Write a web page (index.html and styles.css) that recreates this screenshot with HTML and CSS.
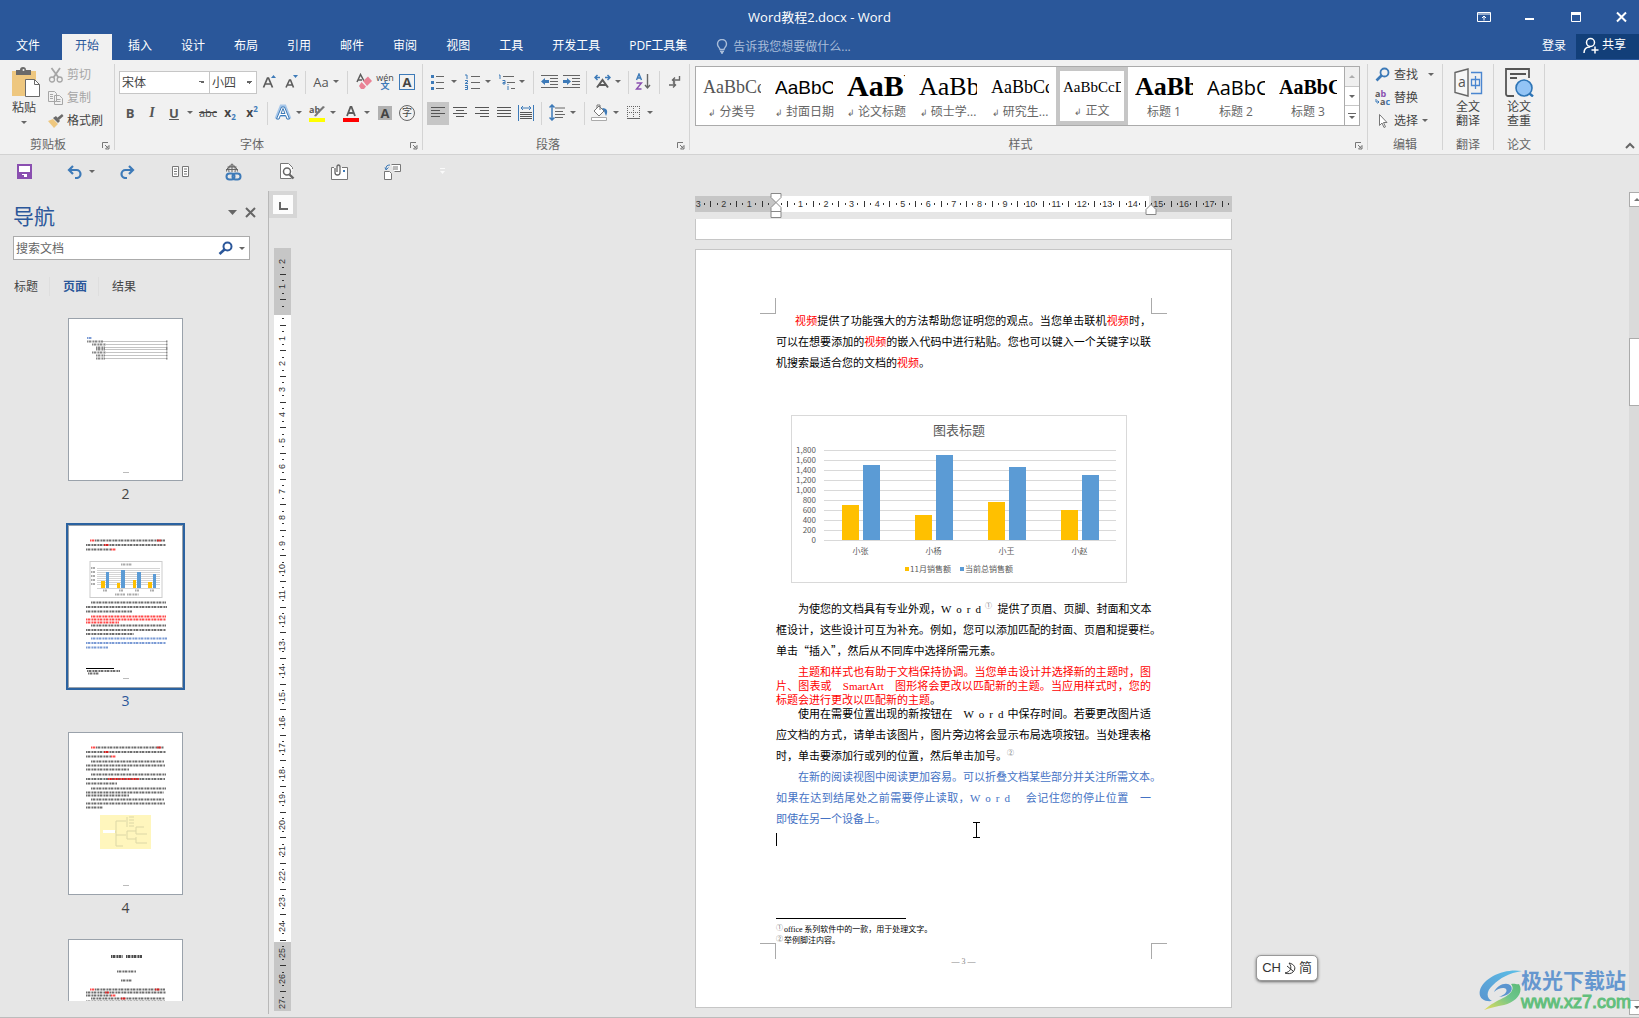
FILE: index.html
```html
<!DOCTYPE html>
<html lang="zh-CN">
<head>
<meta charset="utf-8">
<title>Word教程2.docx - Word</title>
<link rel="stylesheet" href="styles.css">
</head>
<body>
<div class="app">

<header class="top">
  <div class="titlebar">
    <h1 class="title">Word教程2.docx - Word</h1>
    <div class="win">
      <button aria-label="功能区显示选项"><svg width="14" height="12" viewBox="0 0 14 12"><path d="M.5 1.500h13v9H.5zM.5 3h13M7 9.500V5M5 7l2-2 2 2" fill="none" stroke="#fff"/></svg></button>
      <button aria-label="最小化"><svg width="10" height="12" viewBox="0 0 10 12"><path d="M0 8h9" stroke="#fff" stroke-width="2"/></svg></button>
      <button aria-label="最大化"><svg width="11" height="12" viewBox="0 0 11 12"><path d="M.5 1.500h9v9h-9z" fill="none" stroke="#fff"/><path d="M0 2.500h10" stroke="#fff" stroke-width="3"/></svg></button>
      <button aria-label="关闭"><svg width="11" height="12" viewBox="0 0 11 12"><path d="M1 1.500l9 9M10 1.500l-9 9" stroke="#fff" stroke-width="2"/></svg></button>
    </div>
  </div>
  <nav class="tabs">
    <button class="file">文件</button>
    <button class="on">开始</button>
    <button>插入</button>
    <button>设计</button>
    <button>布局</button>
    <button>引用</button>
    <button>邮件</button>
    <button>审阅</button>
    <button>视图</button>
    <button>工具</button>
    <button>开发工具</button>
    <button>PDF工具集</button>
    <button class="tell"><svg width="12" height="15" viewBox="0 0 12 15"><path d="M4 10.500C4 8.500 1.500 8 1.500 5a4.500 4.500 0 0 1 9 0c0 3-2.500 3.500-2.500 5.500zM4 12.500h4M5 14h2" fill="none" stroke="#a9bdd9" stroke-width="1.400"/></svg>告诉我您想要做什么...</button>
    <span class="grow"></span>
    <button class="login">登录</button>
    <button class="share"><svg width="16" height="17" viewBox="0 0 16 17"><circle cx="7.500" cy="5.500" r="4" fill="none" stroke="#fff" stroke-width="1.500"/><path d="M1 16c0-4 2.500-6 6-6M8.500 13h7M12 9.500v7" fill="none" stroke="#fff" stroke-width="1.500"/></svg>共享</button>
  </nav>
</header>

<section class="ribbon">
  <div class="group g-clip">
    <div class="clip">
      <button class="paste">
        <svg width="30" height="31" viewBox="0 0 30 31"><path d="M1 4h24v25H1z" fill="#eec77f"/><path d="M5 3h4a3 3 0 0 1 6 0h5v5H5z" fill="#6a6a6a"/><circle cx="12.500" cy="3" r="1" fill="#f1f1f1"/><path d="M14.500 12.500h9l5 5v12h-14z" fill="#fff" stroke="#6a6a6a"/><path d="M23.500 12.500v5h5" fill="none" stroke="#6a6a6a"/></svg>
        <span>粘贴</span><i class="ar"></i>
      </button>
      <div class="rows3">
        <button class="dim"><svg width="16" height="16" viewBox="0 0 16 16"><path d="M3.500 1l7 9.500M12 1L5.500 10.500" stroke="#a6a6a6" stroke-width="1.800" fill="none"/><circle cx="4" cy="12.500" r="2.500" fill="none" stroke="#a6a6a6" stroke-width="1.300"/><circle cx="11.700" cy="12.500" r="2.500" fill="none" stroke="#a6a6a6" stroke-width="1.300"/></svg>剪切</button>
        <button class="dim"><svg width="16" height="16" viewBox="0 0 16 16"><path d="M.5 1.500h6l2 2v8h-8zM6.500 5.500h5l3 3v6h-8z" fill="#f1f1f1" stroke="#a6a6a6"/><path d="M2 4.500h3M2 6.500h3M2 8.500h3M8.500 9.500h4M8.500 11.500h4" stroke="#a6a6a6"/></svg>复制</button>
        <button><svg width="16" height="16" viewBox="0 0 16 16"><path d="M0 8l5-2 5 5-4 4z" fill="#eec77f"/><path d="M5 5l3-2 4 5-2 2z" fill="#6a6a6a"/><path d="M9 5l5-4 1.500 2L11 7z" fill="#6a6a6a"/></svg>格式刷</button>
      </div>
    </div>
    <footer><span>剪贴板</span><button class="launch" aria-label="剪贴板选项"><svg width="8" height="8" viewBox="0 0 8 8"><path d="M.5 6V.5H6M3 3l3.500 3.500M7 3.500V7H3.500z" fill="none" stroke="#777"/></svg></button></footer>
  </div>

  <div class="group g-font">
    <div class="tools">
      <div class="row">
        <select class="fontname" aria-label="字体"><option>宋体</option></select><select class="fontsize" aria-label="字号"><option>小四</option></select>
        <button aria-label="增大字号"><svg width="15" height="15" viewBox="0 0 15 15"><path d="M1.500 13.500L5.500 4h1l4 9.500M3 10h6" fill="none" stroke="#5c5c5c" stroke-width="1.700"/><path d="M9 4l2.500-3L14 4z" fill="#3d7ab8"/></svg></button>
        <button aria-label="减小字号"><svg width="15" height="15" viewBox="0 0 15 15"><path d="M2 13.500L5.500 6h1l3 7.500M3.500 11h5" fill="none" stroke="#5c5c5c" stroke-width="1.600"/><path d="M9 1h5l-2.500 3z" fill="#3d7ab8"/></svg></button>
        <i class="sep s7"></i>
        <button class="aa">Aa<i class="ar"></i></button>
        <i class="sep"></i>
        <button aria-label="清除格式"><svg width="17" height="17" viewBox="0 0 17 17"><path d="M2 9L5.500 1.500 9 8M3 7h4" fill="none" stroke="#5c5c5c" stroke-width="1.500"/><path d="M8 8l5-4.500 4 4.500-5 5z" fill="#ea8295"/><path d="M6.500 9l4.500 4.500-2 2.500H6L4 13z" fill="#ea8295"/></svg></button>
        <button class="wen" aria-label="拼音指南"><span>wén</span><b>文</b></button>
        <button aria-label="字符边框"><span class="boxa">A</span></button>
      </div>
      <div class="row">
        <button class="fmt"><b>B</b></button><button class="fmt it"><b>I</b></button><button class="fmt"><u><b>U</b></u></button><button class="dd" aria-label="下划线样式"><i class="ar"></i></button>
        <button class="abc"><s>abc</s></button><button class="scr"><b>x<sub>2</sub></b></button><button class="scr"><b>x<sup>2</sup></b></button>
        <i class="sep"></i>
        <button aria-label="文本效果"><svg width="18" height="18" viewBox="0 0 18 18"><path d="M2.500 15L7.500 2.500h3L15.500 15M5 11h8" fill="none" stroke="#a8c8ea" stroke-width="4"/><path d="M2.500 15L7.500 3h3L15.500 15h-2.600l-1.200-3.500H6.300L5.100 15zM7 9.500h4L9 4.500z" fill="#fff" stroke="#3d7ab8"/></svg></button><button class="dd" aria-label="效果菜单"><i class="ar"></i></button>
        <button aria-label="突出显示"><svg width="18" height="18" viewBox="0 0 18 18"><path d="M1 14h16v4H1z" fill="#ff0"/><text x="1" y="9" class="ab">ab</text><path d="M17 3l-6 6-3 3.500L6 12l3-4 6-6z" fill="#777"/></svg></button><button class="dd" aria-label="突出显示颜色"><i class="ar"></i></button>
        <button aria-label="字体颜色"><svg width="18" height="18" viewBox="0 0 18 18"><path d="M1 14h16v4H1z" fill="red"/><path d="M5 12L8.500 3h1L13 12M6.500 9h5" fill="none" stroke="#5c5c5c" stroke-width="1.800"/></svg></button><button class="dd" aria-label="颜色菜单"><i class="ar"></i></button>
        <button aria-label="字符底纹"><span class="shadea">A</span></button>
        <button aria-label="带圈字符"><span class="circ">字</span></button>
      </div>
    </div>
    <footer><span>字体</span><button class="launch" aria-label="字体选项"><svg width="8" height="8" viewBox="0 0 8 8"><path d="M.5 6V.5H6M3 3l3.500 3.500M7 3.500V7H3.500z" fill="none" stroke="#777"/></svg></button></footer>
  </div>

  <div class="group g-para">
    <div class="tools">
      <div class="row">
        <button aria-label="项目符号"><svg width="16" height="16" viewBox="0 0 16 16"><path d="M6 2.500h8M6 8.500h8M6 14.500h8" stroke="#666"/><path d="M1 1h3v3H1zM1 7h3v3H1zM1 13h3v3H1z" fill="#3d7ab8"/></svg></button><button class="dd" aria-label="项目符号库"><i class="ar"></i></button>
        <button aria-label="编号"><svg width="16" height="16" viewBox="0 0 16 16"><path d="M7 2.500h9M7 8.500h9M7 14.500h9" stroke="#666"/><path d="M1 1h2v4M1 6.500h2.500v1.500L1 9.500h3M1 11.500h2.500v4H1M1 13.500h2" fill="none" stroke="#3d7ab8"/></svg></button><button class="dd" aria-label="编号库"><i class="ar"></i></button>
        <button aria-label="多级列表"><svg width="17" height="16" viewBox="0 0 17 16"><path d="M5 2.500h11M9 8.500h8M13 14.500h4" stroke="#666"/><path d="M1 1h1v4M4.500 6.500h2.500v3.500H5V8.500h2M10 10v1M10 12v4" fill="none" stroke="#3d7ab8"/></svg></button><button class="dd" aria-label="多级列表库"><i class="ar"></i></button>
        <i class="sep"></i>
        <button aria-label="减少缩进量"><svg width="17" height="14" viewBox="0 0 17 14"><path d="M0 .5h17M9 3.500h8M9 6.500h8M9 9.500h8M0 12.500h17" stroke="#666"/><path d="M0 6.500l4-3.500v2h4v3H4v2z" fill="#3d7ab8"/></svg></button>
        <button aria-label="增加缩进量"><svg width="17" height="14" viewBox="0 0 17 14"><path d="M0 .5h17M9 3.500h8M9 6.500h8M9 9.500h8M0 12.500h17" stroke="#666"/><path d="M8 6.500L4 3v2H0v3h4v2z" fill="#3d7ab8"/></svg></button>
        <i class="sep"></i>
        <button aria-label="中文版式"><svg width="17" height="15" viewBox="0 0 17 15"><path d="M3 13.500L8.500 6 14 13.500M5 11h7" fill="none" stroke="#5c5c5c" stroke-width="2"/><path d="M1 3.500h5M11 3.500h5M3.500 1L1 3.500 3.500 6M13.500 1L16 3.500 13.500 6" fill="none" stroke="#3d7ab8" stroke-width="1.500"/></svg></button><button class="dd" aria-label="中文版式菜单"><i class="ar"></i></button>
        <i class="sep s7"></i>
        <button aria-label="排序"><svg width="16" height="17" viewBox="0 0 16 17"><path d="M1.500 7L4 1l2.500 6M2.500 5h3" fill="none" stroke="#3d7ab8" stroke-width="1.400"/><path d="M1.500 10h5L1.500 16h5" fill="none" stroke="#8a4fb0" stroke-width="1.400"/><path d="M12.500 1v14M10 12l2.500 3 2.500-3" fill="none" stroke="#666" stroke-width="1.400"/></svg></button>
        <i class="sep s11"></i>
        <button class="marks" aria-label="显示编辑标记"><svg width="12" height="14" viewBox="0 0 12 14"><path d="M10.500 1v4H4M6 2.500L3.500 5 6 7.500M0 10h6M4 7.500L6.500 10 4 12.500" fill="none" stroke="#666" stroke-width="1.400"/></svg></button>
      </div>
      <div class="row">
        <button class="sel" aria-label="左对齐"><svg width="15" height="11" viewBox="0 0 15 11"><path d="M0 .5h14M0 3.500h9M0 6.500h14M0 9.500h9" stroke="#555"/></svg></button>
        <button aria-label="居中"><svg width="15" height="11" viewBox="0 0 15 11"><path d="M0 .5h14M3 3.500h8M0 6.500h14M3 9.500h8" stroke="#555"/></svg></button>
        <button aria-label="右对齐"><svg width="15" height="11" viewBox="0 0 15 11"><path d="M0 .5h14M5 3.500h9M0 6.500h14M5 9.500h9" stroke="#555"/></svg></button>
        <button aria-label="两端对齐"><svg width="15" height="11" viewBox="0 0 15 11"><path d="M0 .5h14M0 3.500h14M0 6.500h14M0 9.500h14" stroke="#555"/></svg></button>
        <button aria-label="分散对齐"><svg width="16" height="16" viewBox="0 0 16 16"><path d="M.5 0v16M15.500 0v16M3 3h10M5 1L3 3l2 2M11 1l2 2-2 2" fill="none" stroke="#3d7ab8"/><path d="M2 7.500h12M2 9.500h12M2 11.500h12M2 13.500h12" stroke="#555"/></svg></button>
        <i class="sep"></i>
        <button aria-label="行距"><svg width="16" height="17" viewBox="0 0 16 17"><path d="M6 4h10M6 7.500h8M6 10.500h10M6 13.500h8" stroke="#666"/><path d="M3 1v15M.5 3.500L3 1l2.500 2.500M.5 13.500L3 16l2.500-2.500" fill="none" stroke="#3d7ab8" stroke-width="1.500"/></svg></button><button class="dd" aria-label="行距菜单"><i class="ar"></i></button>
        <i class="sep"></i>
        <button aria-label="底纹"><svg width="18" height="17" viewBox="0 0 18 17"><path d="M3 7l5-5 5 5-5 5zM6 4V1h3v5" fill="#fff" stroke="#777"/><path d="M11 4c6 0 6 4 4 8l-2-5z" fill="#3d7ab8"/><path d="M.5 13.500h15v3H.5z" fill="#fff" stroke="#aaa"/></svg></button><button class="dd" aria-label="底纹颜色"><i class="ar"></i></button>
        <button aria-label="边框"><svg width="14" height="14" viewBox="0 0 14 14"><path d="M0 .5h13M0 6.500h13M.5 0v12M6.500 0v12M12.500 0v12" stroke="#666" stroke-dasharray="1 1"/><path d="M0 12.500h13" stroke="#666"/></svg></button><button class="dd" aria-label="边框菜单"><i class="ar"></i></button>
      </div>
    </div>
    <footer><span>段落</span><button class="launch" aria-label="段落选项"><svg width="8" height="8" viewBox="0 0 8 8"><path d="M.5 6V.5H6M3 3l3.500 3.500M7 3.500V7H3.500z" fill="none" stroke="#777"/></svg></button></footer>
  </div>

  <div class="group g-styles">
    <div class="gallery">
      <button><span class="pv p1">AaBbCc</span><span class="nm"><small>↲</small> 分类号</span></button>
      <button><span class="pv p2">AaBbCc</span><span class="nm"><small>↲</small> 封面日期</span></button>
      <button><span class="pv p3">AaBb</span><span class="nm"><small>↲</small> 论文标题</span></button>
      <button><span class="pv p4">AaBb</span><span class="nm"><small>↲</small> 硕士学...</span></button>
      <button><span class="pv p5">AaBbCc</span><span class="nm"><small>↲</small> 研究生...</span></button>
      <button class="cur"><span class="pv p6">AaBbCcD</span><span class="nm"><small>↲</small> 正文</span></button>
      <button><span class="pv p7">AaBb</span><span class="nm">标题 1</span></button>
      <button><span class="pv p8">AaBbC</span><span class="nm">标题 2</span></button>
      <button><span class="pv p9">AaBbC</span><span class="nm">标题 3</span></button>
      <div class="gscroll">
        <button class="off" aria-label="上一行"><i class="ar up"></i></button>
        <button aria-label="下一行"><i class="ar"></i></button>
        <button aria-label="其他"><svg width="8" height="6" viewBox="0 0 8 6"><path d="M0 .5h8" stroke="#666"/><path d="M1 3h6L4 6z" fill="#666"/></svg></button>
      </div>
    </div>
    <footer><span>样式</span><button class="launch" aria-label="样式选项"><svg width="8" height="8" viewBox="0 0 8 8"><path d="M.5 6V.5H6M3 3l3.500 3.500M7 3.500V7H3.500z" fill="none" stroke="#777"/></svg></button></footer>
  </div>

  <div class="group g-edit">
    <div class="rows3">
      <button><svg width="16" height="16" viewBox="0 0 16 16"><circle cx="9.500" cy="5.500" r="4" fill="none" stroke="#3d7ab8" stroke-width="1.800"/><path d="M6.500 8.500L1.500 13.500" stroke="#3d7ab8" stroke-width="2.600"/></svg>查找<i class="ar far"></i></button>
      <button><svg width="16" height="16" viewBox="0 0 16 16"><text x="0" y="7" class="rep1">a<tspan fill="#8a4fb0">b</tspan></text><text x="5" y="15" class="rep1">a<tspan fill="#3d7ab8">c</tspan></text><path d="M1 9v3h3M2.500 10.500L4 12l-1.500 1.500" fill="none" stroke="#3d7ab8"/></svg>替换</button>
      <button><svg width="16" height="16" viewBox="0 0 16 16"><path d="M4.500 1.500v11l2.500-2.500 2 4.500 1.500-.7-2-4.300h3.500z" fill="#fff" stroke="#777"/></svg>选择<i class="ar"></i></button>
    </div>
    <footer><span>编辑</span></footer>
  </div>

  <div class="group g-big">
    <button class="big"><svg width="29" height="29" viewBox="0 0 29 29"><path d="M1 4.500l13-3.500v27L1 24.500z" fill="#f7f7f7" stroke="#666" stroke-width="1.400"/><path d="M17 4.500h10.500v21H17" fill="none" stroke="#4a86d0" stroke-width="1.400"/><path d="M17.500 11.500h8v6h-8zM21.500 8v13" fill="none" stroke="#4a86d0" stroke-width="1.300"/><text x="4" y="19" class="trA">a</text></svg><span>全文<br>翻译</span></button>
    <footer><span>翻译</span></footer>
  </div>
  <div class="group g-big">
    <button class="big"><svg width="29" height="29" viewBox="0 0 29 29"><path d="M9 28H3A2 2 0 0 1 1 26V1h23v9" fill="none" stroke="#555" stroke-width="1.800"/><path d="M5 6h16M5 10h7" stroke="#555" stroke-width="1.800"/><circle cx="19" cy="20" r="8" fill="#93c4f5" stroke="#2e75b6" stroke-width="1.600"/><path d="M24.500 25.500l3.500 3" stroke="#2e75b6" stroke-width="2.400"/></svg><span>论文<br>查重</span></button>
    <footer><span>论文</span></footer>
  </div>
  <div class="tail"><button aria-label="折叠功能区"><svg width="10" height="7" viewBox="0 0 10 7"><path d="M1 6l4-4 4 4" fill="none" stroke="#666" stroke-width="2"/></svg></button></div>
</section>

<section class="qat">
  <button class="save" aria-label="保存"><svg width="15" height="15" viewBox="0 0 15 15"><path d="M1 1h13v13H1z" fill="#fff" stroke="#8a4fb0" stroke-width="2"/><path d="M1 8h13v6H1z" fill="#8a4fb0"/><path d="M5 10h5v3H5z" fill="#fff"/><path d="M5 11h2v3H5z" fill="#8a4fb0"/></svg></button>
  <button class="undo" aria-label="撤消"><svg width="15" height="14" viewBox="0 0 15 14"><path d="M2 5h7.500a4 4 0 0 1 0 8H8M6 1L2 5l4 4" fill="none" stroke="#3d7ab8" stroke-width="2.200"/></svg><i class="ar"></i></button>
  <button aria-label="恢复"><svg width="15" height="14" viewBox="0 0 15 14"><path d="M13 5H5.500a4 4 0 0 0 0 8H7M9 1l4 4-4 4" fill="none" stroke="#3d7ab8" stroke-width="2.200"/></svg></button>
  <button aria-label="双页"><svg width="17" height="13" viewBox="0 0 17 13"><path d="M.5 1.500h6v10h-6zM10.500 1.500h6v10h-6z" fill="#fff" stroke="#777"/><path d="M2 4h3M2 6.500h3M2 9h3M12 4h3M12 6.500h3M12 9h3" stroke="#777"/></svg></button>
  <button aria-label="超链接"><svg width="17" height="18" viewBox="0 0 17 18"><path d="M1.500 8.500a5.500 5.500 0 1 1 11 0M7 1v8M1 6.500h12M2.500 4h9M4 9c-1-5 1-7 3-8 2 1 4 3 3 8" fill="none" stroke="#666"/><rect x="1.500" y="10.500" width="8" height="6" rx="3" fill="none" stroke="#3d7ab8" stroke-width="2"/><rect x="7.500" y="10.500" width="8" height="6" rx="3" fill="none" stroke="#3d7ab8" stroke-width="2"/></svg></button>
  <button class="right" aria-label="打印预览"><svg width="15" height="17" viewBox="0 0 15 17"><path d="M12.500 6V4.500l-4-4h-8v15h11" fill="#fff" stroke="#777"/><circle cx="7" cy="8.500" r="3.500" fill="none" stroke="#666" stroke-width="1.500"/><path d="M9.500 11.500l4 4" stroke="#666" stroke-width="2.400"/></svg></button>
  <button aria-label="附件邮件"><svg width="17" height="16" viewBox="0 0 17 16"><path d="M3 3.500H.5v12h16v-12H11" fill="#fff" stroke="#777"/><path d="M4 4v4.500a2.500 2.500 0 0 0 5 0V2.500a1.500 1.500 0 0 0-3 0V8" fill="none" stroke="#666" stroke-width="1.300"/><path d="M12 6h2v2h-2z" fill="#3d7ab8"/></svg></button>
  <button aria-label="替换文档"><svg width="17" height="17" viewBox="0 0 17 17"><path d="M7.500 1.500h9v7h-6M9 4h5M9 6h5M.5 8.500h5l2 2v6h-7z" fill="#fff" stroke="#777"/><path d="M2 6c0-3 1-4 4-4M4.500 4.500L2 7 1 4.500" fill="none" stroke="#3d7ab8"/></svg></button>
  <button class="cust" aria-label="自定义快速访问工具栏"><svg width="7" height="7" viewBox="0 0 7 7"><path d="M1 .5h5" stroke="#fafafa"/><path d="M1 3h5L3.500 6z" fill="#fafafa"/></svg></button>
</section>

<main class="work">
  <aside class="nav">
    <div class="navhead"><h2>导航</h2><button aria-label="任务窗格选项"><svg width="9" height="5" viewBox="0 0 9 5"><path d="M0 0h9L4.500 5z" fill="#666"/></svg></button><button aria-label="关闭导航"><svg width="11" height="11" viewBox="0 0 11 11"><path d="M1 1l9 9M10 1l-9 9" stroke="#666" stroke-width="2"/></svg></button></div>
    <div class="search">
      <input type="text" placeholder="搜索文档" aria-label="搜索文档">
      <button aria-label="搜索"><svg width="15" height="15" viewBox="0 0 15 15"><circle cx="9.500" cy="5.500" r="4" fill="none" stroke="#2b579a" stroke-width="2"/><path d="M6.500 8.500L1.500 13" stroke="#2b579a" stroke-width="2.600"/></svg></button>
      <button aria-label="搜索选项"><i class="ar"></i></button>
    </div>
    <div class="navtabs"><button>标题</button><button class="on">页面</button><button>结果</button></div>
    <div class="thumbs">
      <figure>
        <svg class="thumb" viewBox="0 0 113 161">
          <path class="tx" d="M18 19h5" stroke="#4472c4"/>
          <g class="tx" stroke="#555"><path d="M18 22.500h16M23 25.500h14M27 28.500h9M27 30.500h9M23 33.500h14M27 36.500h9M27 39.500h9M97 22.500h2M97 25.500h2M97 28.500h2M97 30.500h2M97 33.500h2M97 36.500h2M97 39.500h2"/></g>
          <path d="M34 22.500h63M37 25.500h60M36 28.500h61M36 30.500h61M37 33.500h60M36 36.500h61M36 39.500h61" stroke="#c4c4c4"/>
          <path d="M54 153.500h6" stroke="#bbb"/>
        </svg>
        <figcaption>2</figcaption>
      </figure>
      <figure class="on">
        <svg class="thumb" viewBox="0 0 113 161">
          <g class="tx" stroke="#333"><path d="M26 14.500h70M17 19h80M17 23.500h25M22 76.500h75M17 81h81M17 85.500h46M22 99.500h75M17 104h80M17 108h48M18 145h33M19 147.500h11"/></g>
          <g class="tx" stroke="red"><path d="M21 14.500h5M88 14.500h4M35 19h5M42 23.500h5M22 90.500h75M17 93.500h80M17 96.500h33"/></g>
          <g class="tx" stroke="#4472c4"><path d="M22 112.500h76M17 117h80M17 121.500h22"/></g>
          <path d="M17 142.500h28" stroke="#000"/>
          <rect x="21" y="35.500" width="72" height="36" fill="#fff" stroke="#ccc"/>
          <path d="M28 42.500h63M28 44.500h63M28 46.500h63M28 48.500h63M28 50.500h63M28 52.500h63M28 54.500h63M28 56.500h63M28 58.500h63M28 62.500h63" stroke="#d5d5d5"/>
          <path d="M32 55h4v7h-4zM48 57h3v5h-3zM64 54h3v8h-3zM79 56h4v6h-4z" fill="#ffc000"/>
          <path d="M37 46h3v16h-3zM52 44h4v18h-4zM68 46h4v16h-4zM84 48h3v14h-3z" fill="#5b9bd5"/>
          <g class="tx" stroke="#888"><path d="M52 38.500h11M34 64.500h4M50 64.500h4M66 64.500h4M81 64.500h4M46 68.500h10M58 68.500h12M22 42h4M22 46h4M22 50h4M22 54h4M22 58h4"/></g>
          <path d="M54 152.500h6" stroke="#bbb"/>
        </svg>
        <figcaption>3</figcaption>
      </figure>
      <figure>
        <svg class="thumb" viewBox="0 0 113 161">
          <g class="tx" stroke="#333"><path d="M27 14.500h68M17 19h80M17 23.500h25M22 28.500h73M17 32.500h79M17 36.500h43M22 41.500h75M17 46h79M17 50.500h31M22 55.500h75M17 59.500h78M17 62.500h43M22 66.500h73M17 70.500h79M17 74.500h17"/></g>
          <g class="tx" stroke="red"><path d="M22 14.500h5M88 14.500h4M35 19h5M42 23.500h5M39 46h31"/></g>
          <rect x="31" y="82" width="51" height="34" fill="#fff6bd"/>
          <path d="M34 99h13M47 88v25M47 88h10M47 102h10M47 113h7M58 84v10M58 98v8M58 98h9M58 106h9M67 94v7M67 94h8M67 101h11M67 104v6M67 110h11M60 84h5M60 87h5M60 90h5M60 93h5" fill="none" stroke="#dcd7a6"/>
          <path d="M34 97h12v3H34z" fill="#fff"/>
          <path d="M54 152.500h6" stroke="#bbb"/>
        </svg>
        <figcaption>4</figcaption>
      </figure>
      <figure>
        <svg class="thumb" viewBox="0 0 113 161">
          <g class="tx" stroke="#333"><path d="M42 16.500h12M57 16.500h16" stroke="#000" stroke-width="3"/><path d="M48 31.500h19M52 40.500h11M26 49.500h70M17 52.500h80M17 55.500h25M22 58.500h74M17 61.500h79"/></g>
          <g class="tx" stroke="red"><path d="M21 49.500h5M86 49.500h5M36 52.500h4M42 55.500h5M52 58.500h5"/></g>
        </svg>
        <figcaption>5</figcaption>
      </figure>
    </div>
  </aside>

  <div class="vcol">
    <button class="tabsel" aria-label="制表符"><svg width="9" height="8" viewBox="0 0 9 8"><path d="M1 0v7h8" fill="none" stroke="#666" stroke-width="2"/></svg></button>
    <div class="vruler" id="vruler"></div>
  </div>

  <div class="canvas">
    <div class="hwrap">
      <div class="hruler" id="hruler"></div>
      <svg class="indent" width="12" height="28" viewBox="0 0 12 28"><path d="M1 .5h10v4l-5 5-5-5zM1 18.500v-4l5-5 5 5v4zM1 18.500h10v6H1z" fill="#fff" stroke="#888"/></svg>
      <svg class="indent right" width="12" height="12" viewBox="0 0 12 12"><path d="M1 10.500v-5l5-5 5 5v5z" fill="#fff" stroke="#888"/></svg>
    </div>
    <div class="sheet prev"></div>
    <article class="sheet page">
      <i class="crop tl"></i><i class="crop tr"></i><i class="crop bl"></i><i class="crop br"></i>
      <p class="first"><span class="ln full"><em>视频</em>提供了功能强大的方法帮助您证明您的观点。当您单击联机<em>视频</em>时，</span><span class="ln full">可以在想要添加的<em>视频</em>的嵌入代码中进行粘贴。您也可以键入一个关键字以联</span><span class="ln">机搜索最适合您的文档的<em>视频</em>。</span></p>
      <figure class="chart">
        <figcaption>图表标题</figcaption>
        <div class="plotrow">
          <div class="yaxis"><span>1,800</span><span>1,600</span><span>1,400</span><span>1,200</span><span>1,000</span><span>800</span><span>600</span><span>400</span><span>200</span><span>0</span></div>
          <div class="plot">
            <div class="cat"><b style="height:39%"></b><b style="height:83%"></b></div>
            <div class="cat"><b style="height:28%"></b><b style="height:94%"></b></div>
            <div class="cat"><b style="height:42%"></b><b style="height:81%"></b></div>
            <div class="cat"><b style="height:33%"></b><b style="height:72%"></b></div>
          </div>
        </div>
        <div class="xaxis"><span>小张</span><span>小杨</span><span>小王</span><span>小赵</span></div>
        <div class="legend"><span class="k1">11月销售额</span><span class="k2">当前总销售额</span></div>
      </figure>
      <p><span class="ln full">为使您的文档具有专业外观，<span class="wide">W o r d</span><sup>①</sup>&ensp;提供了页眉、页脚、封面和文本</span><span class="ln">框设计，这些设计可互为补充。例如，您可以添加匹配的封面、页眉和提要栏。</span><span class="ln">单击“插入”，然后从不同库中选择所需元素。</span></p>
      <p class="red"><span class="ln full">主题和样式也有助于文档保持协调。当您单击设计并选择新的主题时，图</span><span class="ln full">片、图表或　<span class="lat">SmartArt</span>　图形将会更改以匹配新的主题。当应用样式时，您的</span><span class="ln">标题会进行更改以匹配新的主题<span class="blk">。</span></span></p>
      <p><span class="ln full">使用在需要位置出现的新按钮在　<span class="wide">W o r d</span>中保存时间。若要更改图片适</span><span class="ln full">应文档的方式，请单击该图片，图片旁边将会显示布局选项按钮。当处理表格</span><span class="ln">时，单击要添加行或列的位置，然后单击加号。<sup>②</sup></span></p>
      <p class="blue"><span class="ln">在新的阅读视图中阅读更加容易。可以折叠文档某些部分并关注所需文本。</span><span class="ln full">如果在达到结尾处之前需要停止读取，<span class="wide">W o r d</span>　会记住您的停止位置　一</span><span class="ln">即使在另一个设备上。</span></p>
      <div class="caret"></div>
      <div class="notes"><div><sup>①</sup><span><span class="lat">office</span> 系列软件中的一款，用于处理文字。</span></div><div><sup>②</sup><span>举例脚注内容。</span></div></div>
      <div class="pgno">— 3 —</div>
      <svg class="ibeam" width="7" height="16" viewBox="0 0 7 16"><path d="M0 .5h7M3.500 .5v15M0 15.500h7" stroke="#000" fill="none"/></svg>
    </article>
  </div>

  <div class="vscroll">
    <button aria-label="向上滚动"><i class="ar up"></i></button>
    <div class="track"><div class="grip"></div></div>
    <button aria-label="向下滚动"><i class="ar"></i></button>
  </div>
</main>

<div class="ime">CH <svg width="12" height="13" viewBox="0 0 12 13"><path d="M5 1c5 1 8 5 4 9-2 2-5 2-8 1 5-1 8-5 4-10zM3 4l6 5" fill="none" stroke="#333"/></svg> 简</div>

<div class="mark">
  <svg width="44" height="42" viewBox="0 0 44 42">
    <defs>
      <linearGradient id="lb" x1="0" y1="1" x2="1" y2="0"><stop offset="0" stop-color="#5a95cf"/><stop offset="1" stop-color="#5cc0e8"/></linearGradient>
      <linearGradient id="lg" x1="0" y1="1" x2="1" y2="0"><stop offset="0" stop-color="#e6dc5a"/><stop offset=".6" stop-color="#6cc58c"/><stop offset="1" stop-color="#5dbb78"/></linearGradient>
    </defs>
    <path d="M43 2C26-1 5 8 1 21c-2 8 4 12 12 11-6-3-6-10 1-16C21 9 30 4 43 2z" fill="url(#lb)"/>
    <path d="M15 23c3-7 13-11 17-6 3 5-3 10-12 11 5-2 9-5 7-8-2-2-8-1-12 3z" fill="#5a95cf"/>
    <path d="M32 15c4-1 6 1 8 0 5 9-3 18-15 21-7 1-14 3-20 5 7-6 13-9 19-12 8-4 12-9 8-14z" fill="url(#lg)"/>
  </svg>
  <div><strong>极光下载站</strong><a href="#">www.xz7.com</a></div>
</div>
</div>
<script src="script.js"></script>
</body>
</html>
```
FILE: styles.css
```css
* { box-sizing: border-box; }
body { margin: 0; font: 12px/16px "Open Sans", "Noto Sans CJK SC", sans-serif; color: #444; background: #e6e6e6; }
button { font: inherit; color: inherit; background: none; border: 0; padding: 0; margin: 0; }
svg { display: block; flex: none; }
h1, h2, p, figure { margin: 0; }
.app { position: relative; display: flex; flex-direction: column; height: 100vh; overflow: hidden; border-bottom: 1px solid #bcbcbc; }

.ar { display: block; flex: none; width: 0; height: 0; border: 3px solid transparent; border-top: 3px solid #666; border-bottom: 0; }
.ar.up { border-top: 0; border-bottom: 3px solid #777; }

/* title bar and tabs */
.top { background: #2a579a; color: #fff; }
.titlebar { display: flex; height: 34px; align-items: center; justify-content: flex-end; position: relative; }
.title { position: absolute; left: 0; right: 0; text-align: center; font-size: 13px; font-weight: 400; line-height: 34px; }
.win { display: flex; position: relative; }
.win button { width: 46px; height: 32px; display: flex; align-items: center; justify-content: center; }
.win button:last-child { width: 34px; padding-right: 2px; margin-left: 6px; }
.tabs { display: flex; height: 26px; gap: 3px; line-height: 20px; }
.tabs button { padding: 0 13px 3px; white-space: nowrap; }
.tabs .file { padding: 0 16px 3px; margin-right: 3px; }
.tabs .on { background: #f1f1f1; color: #2a579a; }
.tabs .tell { display: flex; gap: 5px; align-items: center; color: #a9bdd9; padding-bottom: 1px; }
.grow { flex: 1; }
.tabs .login { padding: 0 7px 3px; }
.tabs .share { display: flex; align-items: center; gap: 3px; background: #123f79; padding: 0 13px 3px 7px; height: 25px; }

/* ribbon */
.ribbon { display: flex; height: 95px; padding: 4px 0; background: #f1f1f1; border-bottom: 1px solid #d2d2d2; }
.group { display: flex; flex-direction: column; flex: none; border-right: 1px solid #d4d4d4; }
.group > :first-child { flex: 1; }
.group footer { display: flex; align-items: center; height: 14px; padding-top: 3px; color: #666; position: relative; justify-content: center; }
.launch { position: absolute; right: 4px; bottom: 0; }
.g-clip { width: 115px; }
.g-font { width: 308px; }
.g-para { width: 267px; }
.g-styles { flex: 1; min-width: 0; }
.g-edit { width: 75px; }
.g-big { width: 51px; }
.tail { width: 94px; display: flex; justify-content: flex-end; align-items: flex-end; padding: 0 4px 1px 0; }
.g-clip footer { padding-right: 18px; }
.g-font footer { padding-right: 33px; }
.g-para footer { padding-right: 16px; }
.g-styles footer { padding-right: 16px; }
.clip { display: flex; }
.paste { width: 48px; display: flex; flex-direction: column; align-items: center; padding: 3px 0 0 4px; }
.paste span { margin: 2px 4px 5px 0; line-height: 16px; }
.paste .ar { margin-right: 4px; }
.rows3 { display: flex; flex-direction: column; }
.rows3 button { display: flex; align-items: center; height: 23px; gap: 3px; padding-bottom: 2px; text-align: left; }
.rows3 .dim { color: #a6a6a6; }
.g-edit .rows3 { padding-left: 7px; }
.rows3 .ar { margin-left: 1px; }
.rows3 .far { margin-left: 7px; }
.tools { display: flex; flex-direction: column; gap: 8px; padding: 7px 0 0 4px; }
.row { display: flex; height: 23px; }
.row button { width: 22px; height: 23px; padding-bottom: 2px; flex: none; display: flex; align-items: center; justify-content: center; }
.row .dd { width: 12px; padding-right: 2px; }
.row .sel { background: #c6c6c6; }
.row .marks { padding-right: 3px; }
.sep { flex: none; width: 9px; height: 23px; background: linear-gradient(#d4d4d4, #d4d4d4) center / 1px 100% no-repeat; }
.sep.s7 { width: 7px; }
.sep.s11 { width: 11px; }
.row select {
  height: 23px;
  flex: none;
  appearance: none;
  border: 1px solid #c6c6c6;
  border-radius: 0;
  padding: 0 2px;
  font: inherit;
  color: #444;
  background-color: #fff;
  background-image: linear-gradient(to bottom left, #666 50%, transparent 50%), linear-gradient(to bottom right, #666 50%, transparent 50%);
  background-size: 3px 3px;
  background-position: right 7px center, right 4px center;
  background-repeat: no-repeat;
}
.fontname { width: 91px; }
.fontsize { width: 48px; margin-left: -1px; margin-right: 1px; }
.row .aa { width: 34px; gap: 4px; font-size: 13px; color: #555; }
.row .wen { flex-direction: column; font-size: 9px; line-height: 9px; }
.wen b { color: #3d7ab8; font-size: 9px; line-height: 8px; }
.boxa { border: 1px solid #3d7ab8; width: 16px; height: 16px; line-height: 14px; font-weight: 700; font-size: 13px; }
.shadea { background: #b1b1b1; width: 14px; height: 14px; line-height: 14px; font-weight: 700; font-size: 13px; }
.circ { border: 1px solid #666; border-radius: 50%; width: 16px; height: 16px; font-size: 10px; line-height: 13px; }
.fmt { font-size: 13px; color: #555; }
.it { font-family: "Liberation Serif", serif; font-style: italic; font-size: 14px; }
.row .abc { font-size: 11px; }
.row .scr { font-size: 12px; line-height: 12px; }
.scr sub, .scr sup { font-size: 8px; line-height: 0; color: #3d7ab8; }
.ab, .rep1 { font: 700 9px "Open Sans", sans-serif; fill: #5c5c5c; }
.trA { font: 14px "Open Sans", sans-serif; fill: #555; }

.g-styles > .gallery { flex: none; }
.gallery { display: flex; margin: 2px 7px 0 5px; height: 60px; background: #fff; border: 1px solid #ababab; overflow: hidden; }
.gallery + footer { margin-top: auto; }
.gallery > button { width: 72px; flex: none; padding: 0 3px; border: 4px solid transparent; border-width: 1px 4px; overflow: hidden; }
.gallery > .cur { border: 4px solid #c6c6c6; }
.pv { display: block; height: 36px; line-height: 35px; overflow: hidden; color: #000; text-align: left; white-space: nowrap; font-family: "Liberation Serif", serif; }
.cur .pv { height: 33px; line-height: 30px; }
.nm { display: block; height: 16px; line-height: 11px; white-space: nowrap; color: #666; text-align: center; }
.nm small { font-size: 9px; }
.p1 { font-size: 18px; color: #555; }
.p2 { font-family: "Liberation Sans", sans-serif; font-size: 19px; }
.p3 { font-size: 30px; font-weight: 700; line-height: 31px; }
.p4 { font-size: 26px; line-height: 33px; }
.p5 { font-size: 18px; }
.p6 { font-size: 15px; }
.p7 { font-size: 26px; font-weight: 700; line-height: 33px; }
.p8 { font-family: "Open Sans", sans-serif; font-size: 20px; }
.p9 { font-size: 20px; font-weight: 700; }
.gscroll { margin-left: auto; width: 15px; display: flex; flex-direction: column; border-left: 1px solid #ababab; }
.gscroll button { flex: 1; display: flex; align-items: center; justify-content: center; border-top: 1px solid #c6c6c6; }
.gscroll .off { background: #e6e6e6; border-top: 0; opacity: .6; }
.group > .big { width: 50px; display: flex; flex-direction: column; align-items: center; padding-top: 4px; line-height: 14px; gap: 3px; }

/* quick access */
.qat { display: flex; flex: none; height: 35px; padding-bottom: 2px; }
.qat button { width: 53px; display: flex; align-items: center; justify-content: center; position: relative; }
.qat .save { width: 48px; }
.qat .undo .ar { position: absolute; left: 41px; }
.qat .right { padding-left: 2px; }
.qat .cust { width: 46px; }

/* work area */
.work { display: flex; flex: 1; min-height: 0; padding-top: 1px; }
.nav { width: 269px; flex: none; border-right: 1px solid #b8b8b8; display: flex; flex-direction: column; padding: 10px 18px 0 13px; margin: 0 0 3px; min-height: 0; }
.navhead { display: flex; align-items: center; gap: 8px; height: 30px; }
.navhead button { padding-bottom: 8px; }
.navhead h2 { flex: 1; font-size: 21px; line-height: 30px; font-weight: 400; color: #2b579a; }
.navhead button:last-child { margin-right: -6px; }
.search { display: flex; align-items: center; height: 24px; margin-top: 5px; background: #fff; border: 1px solid #ababab; flex: none; }
.search input { flex: 1; min-width: 0; height: 22px; border: 0; background: none; padding: 0 2px; font: inherit; outline: 0; }
.search input::placeholder { color: #666; opacity: 1; }
.search button:last-child { padding: 0 4px 0 6px; }
.navtabs { display: flex; margin: 17px 0 20px; height: 19px; flex: none; }
.navtabs button { width: 49px; text-align: left; padding-left: 13px; border-right: 1px solid #dedede; line-height: 19px; }
.navtabs button:first-child { width: 37px; padding-left: 1px; }
.navtabs button:last-child { border: 0; }
.navtabs .on { font-weight: 700; color: #2b579a; }
.thumbs { flex: 1; min-height: 0; overflow: hidden; display: flex; flex-direction: column; gap: 20px; padding: 0 0 0 53px; margin: 0 0 13px; }
.thumbs figure { flex: none; width: 119px; margin: 0 0 -2px; }
.thumb { width: 119px; height: 167px; border: 2px solid #e6e6e6; background: #fff; outline: 1px solid #9aa2ab; outline-offset: -3px; padding: 1px; }
.thumbs .on .thumb { border-color: #2b62a0; }
.thumbs figcaption { text-align: center; font-size: 14px; line-height: 22px; height: 22px; }
.thumbs .on figcaption { color: #2b579a; }
.tx { stroke-dasharray: 1.5 .5 2 .6 1 .4; stroke-width: 2; opacity: .7; }

.vcol { width: 29px; flex: none; display: flex; flex-direction: column; }
.tabsel { width: 28px; height: 27px; border: 4px solid #d6d6d6; background: #fcfcfc; display: flex; align-items: center; justify-content: center; flex: none; padding-top: 2px; }
.vruler { flex: 1; width: 17px; margin: 30px 0 6px 5px; padding: 10px 0 4px; display: flex; flex-direction: column; background: linear-gradient(#c6c6c6 0 67px, #fff 67px calc(100% - 69px), #c6c6c6 0); }
.vruler i, .hruler i { flex: 1 1 0; min-width: 0; min-height: 0; display: flex; align-items: center; justify-content: center; font: 9px/9px "Liberation Sans", sans-serif; color: #333; white-space: nowrap; }
.vruler i span { writing-mode: vertical-rl; transform: rotate(180deg); }
.dot::before { content: ""; width: 1px; height: 1px; background: #333; flex: none; }
.vruler .dot::before { width: 2px; }
.hruler .dot::before { height: 2px; }
.hruler .bar::before { content: ""; width: 1px; height: 6px; background: #333; flex: none; }
.vruler .bar::before { content: ""; width: 6px; height: 1px; background: #333; flex: none; }

.canvas { flex: 1; display: flex; flex-direction: column; align-items: center; min-width: 0; padding-top: 5px; overflow: hidden; }
.hwrap { position: relative; width: 537px; flex: none; margin-bottom: 7px; }
.hruler { display: flex; height: 16px; background: linear-gradient(to right, #c6c6c6 0 81px, #fff 81px 454px, #e6e6e6 454px 456px, #c6c6c6 0); }
.indent { position: absolute; left: 75px; top: -3px; }
.indent.right { left: auto; right: 75px; top: 8px; }
.sheet { width: 537px; background: #fff; border: 1px solid #c6c6c6; flex: none; position: relative; }
.prev { height: 21px; border-top: 0; margin-bottom: 9px; }
.page { aspect-ratio: 210 / 297; padding: 63px 80px 40px; display: flex; flex-direction: column; font: 11px/14px "Noto Sans CJK SC", sans-serif; color: #000; }
.crop { position: absolute; width: 16px; height: 16px; border: 0 solid #aaa; }
.tl { left: 64px; top: 48px; border-width: 0 1px 1px 0; }
.tr { right: 64px; top: 48px; border-width: 0 0 1px 1px; }
.bl { left: 64px; bottom: 48px; border-width: 1px 1px 0 0; }
.br { right: 64px; bottom: 48px; border-width: 1px 0 0 1px; }
.page p { text-indent: 22px; }
.page .first { text-indent: 19px; }
.ln { display: block; height: 14px; margin-bottom: 7px; white-space: nowrap; }
.ln + .ln { text-indent: 0; }
.full { text-align-last: justify; }
.red .ln { margin-bottom: 0; }
.page em { font-style: normal; color: red; }
.red { color: red; }
.blk { color: #000; }
.blue { color: #4472c4; }
.wide { display: inline-block; width: 44px; text-indent: 0; text-align-last: justify; font-family: "Liberation Serif", serif; padding-right: 4px; }
.lat { font-family: "Liberation Serif", serif; }
.page sup { font-size: 7px; line-height: 0; color: #777; }
.caret { width: 1px; height: 13px; background: #000; margin-top: 1px; }
.chart { width: 336px; margin: 39px 0 18px 15px; height: 168px; flex: none; border: 1px solid #d9d9d9; color: #595959; font-size: 8px; line-height: 10px; }
.chart > figcaption { text-align: center; font-size: 13px; line-height: 28px; margin: 0 0 1px; }
.plotrow { display: flex; padding-right: 10px; }
.yaxis { width: 24px; display: flex; flex-direction: column; text-align: right; }
.plot { flex: 1; display: flex; margin: 5px 0 5px 8px; height: 91px; background: repeating-linear-gradient(#d9d9d9 0 1px, transparent 1px 10px); }
.cat { flex: 1; display: flex; justify-content: center; align-items: flex-end; gap: 4px; padding-bottom: 1px; }
.cat b { width: 17px; background: #5b9bd5; }
.cat b:first-child { background: #ffc000; }
.xaxis { display: flex; padding: 0 10px 0 32px; }
.xaxis span { flex: 1; text-align: center; }
.legend { display: flex; justify-content: center; gap: 9px; margin-top: 8px; }
.legend span { display: flex; align-items: center; gap: 1px; }
.legend span::before { content: ""; width: 4px; height: 4px; background: #5b9bd5; }
.legend .k1::before { background: #ffc000; }
.notes { margin-top: auto; font-size: 8px; line-height: 10px; padding-top: 6px; background: linear-gradient(#000, #000) 0 0 / 130px 1px no-repeat; }
.notes div { display: flex; gap: 1px; }
.notes sup { line-height: 6px; }
.pgno { text-align: center; font-size: 8px; line-height: 10px; color: #888; margin-top: 12px; font-family: "Liberation Serif", serif; }
.ibeam { position: absolute; left: 277px; top: 572px; }

.vscroll { width: 10px; flex: none; display: flex; flex-direction: column; padding: 1px 0 2px; overflow: hidden; }
.vscroll button { width: 16px; height: 15px; border: 1px solid #ababab; background: #fff; display: flex; align-items: center; justify-content: center; }
.track { flex: 1; background: #dadada; padding-top: 131px; }
.grip { width: 16px; height: 68px; background: #fff; border: 1px solid #ababab; }

/* floating items */
.ime { position: absolute; right: 321px; bottom: 36px; display: flex; align-items: center; gap: 3px; height: 26px; padding: 0 5px; border-radius: 5px; background: #fff; border: 1px solid #999; box-shadow: 0 1px 3px #666; font: 13px/24px "Liberation Sans", "Noto Sans CJK SC", sans-serif; color: #333; }
.mark { position: absolute; right: 8px; bottom: 5px; display: flex; align-items: center; }
.mark div { margin-left: -2px; }
.mark strong { display: block; font-size: 21px; line-height: 24px; font-weight: 700; color: #6597cf; }
.mark a { display: block; font: 18px/20px "Liberation Sans", sans-serif; color: #62bf7c; text-decoration: none; -webkit-text-stroke: 1px #62bf7c; }
```
FILE: script.js
```js
// Builds ruler ticks: a number, a dot, a half-unit bar and a dot for every centimetre.
function buildRuler(id, numbers, closing) {
  const ruler = document.getElementById(id);
  const add = (cls, text) => {
    const tick = document.createElement('i');
    if (cls) tick.className = cls;
    if (text) {
      const label = document.createElement('span');
      label.textContent = text;
      tick.appendChild(label);
    }
    ruler.appendChild(tick);
  };
  numbers.forEach((n) => {
    add('', n ? String(n) : '');
    add('dot');
    add('bar');
    add('dot');
  });
  if (closing) add('', String(closing));
}
const upTo = (n) => Array.from({ length: n }, (_, i) => i + 1);
buildRuler('hruler', [3, 2, 1, 0, ...upTo(17)]);
buildRuler('vruler', [2, 1, 0, ...upTo(26)], 27);
```
